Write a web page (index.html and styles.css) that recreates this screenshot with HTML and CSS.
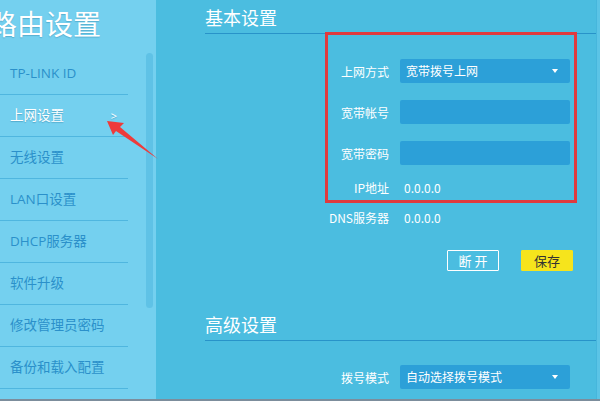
FILE: index.html
```html
<!DOCTYPE html>
<html lang="zh-CN">
<head>
    <meta charset="UTF-8">
    <meta name="viewport" content="width=device-width, initial-scale=1.0">
    <title>路由设置</title>
    <link rel="stylesheet" href="styles.css">
</head>
<body>
<div class="app">
    <!-- Боковое меню -->
    <aside class="sidebar">
        <div class="brand">路由设置</div>
        <div class="side-body">
            <ul class="menu">
                <li>TP-LINK ID</li>
                <li class="active">上网设置<span class="chev">&gt;</span></li>
                <li>无线设置</li>
                <li>LAN口设置</li>
                <li>DHCP服务器</li>
                <li>软件升级</li>
                <li>修改管理员密码</li>
                <li>备份和载入配置</li>
            </ul>
            <div class="scroll-track"></div>
        </div>
    </aside>

    <!-- Основная область -->
    <main class="main">
        <section class="panel basic">
            <h2>基本设置</h2>
            <div class="row first">
                <span class="label">上网方式</span>
                <div class="select">宽带拨号上网<i class="caret"></i></div>
            </div>
            <div class="row">
                <span class="label">宽带帐号</span>
                <input class="field" type="text">
            </div>
            <div class="row">
                <span class="label">宽带密码</span>
                <input class="field" type="password">
            </div>
            <div class="row info ip">
                <span class="label">IP地址</span>
                <span class="value">0.0.0.0</span>
            </div>
            <div class="row info dns">
                <span class="label">DNS服务器</span>
                <span class="value">0.0.0.0</span>
            </div>
            <div class="actions">
                <button class="btn-outline">断 开</button>
                <button class="btn-save">保存</button>
            </div>
        </section>

        <section class="panel advanced">
            <h2>高级设置</h2>
            <div class="row first">
                <span class="label">拨号模式</span>
                <div class="select">自动选择拨号模式<i class="caret"></i></div>
            </div>
        </section>
    </main>
    <div class="edge"></div>
</div>
<div class="status-line"></div>

<!-- Пометки поверх скриншота -->
<div class="highlight"></div>
<svg class="pointer" width="600" height="401" viewBox="0 0 600 401">
    <polygon points="107,121 124,123 120,127 158,159 116,131 113,135" fill="#ee3b3b"/>
</svg>
</body>
</html>
```

FILE: styles.css
```css
:root {
    --color-sidebar: #74d0ef;
    --color-main: #4bbde0;
    --color-field: #2ca0d8;
    --color-line: #2893c9;
    --color-menu-text: #2b90ca;
    --color-menu-line: #4fb6df;
    --color-red: #e03a3e;
    --color-yellow: #f6e41c;
}

html, body {
    margin: 0;
    padding: 0;
}

body {
    width: 600px;
    height: 401px;
    overflow: hidden;
    position: relative;
    background-color: #7c8d9c;
    font-family: "Noto Sans CJK SC", "Open Sans", sans-serif;
    color: #ffffff;
}

.app {
    display: flex;
    height: 399px;
}

/* Боковое меню */
.sidebar {
    width: 156px;
    flex-shrink: 0;
    background-color: var(--color-sidebar);
    overflow: hidden;
}

.brand {
    height: 53px;
    line-height: 47px;
    font-size: 28px;
    margin-left: -11px;
    white-space: nowrap;
    text-shadow: 0 1px 1px rgba(0, 80, 120, 0.25);
}

.side-body {
    display: flex;
}

.menu {
    list-style: none;
    margin: 0;
    padding: 0;
    width: 128px;
}

.menu li {
    height: 41px;
    line-height: 41px;
    padding-left: 10px;
    border-bottom: 1px solid var(--color-menu-line);
    font-family: "Open Sans", "Noto Sans CJK SC", sans-serif;
    font-size: 13.5px;
    color: var(--color-menu-text);
    display: flex;
    justify-content: space-between;
    padding-right: 11px;
}

.menu li.active {
    color: #ffffff;
    text-shadow: 0 1px 1px rgba(0, 80, 120, 0.3);
}

.chev {
    font-size: 11px;
}

.scroll-track {
    width: 7px;
    height: 255px;
    margin-left: 18px;
    border-radius: 4px;
    background-color: #5fc2e6;
}

/* Основная область */
.main {
    flex: 1;
    background-color: var(--color-main);
    padding-left: 49px;
}

.edge {
    width: 4px;
    background-color: #5bc4e6;
    border-left: 1px solid #46b6dc;
    box-sizing: border-box;
}

.panel h2 {
    margin: 0;
    font-size: 18px;
    font-weight: normal;
    line-height: 24px;
    padding-bottom: 4px;
    border-bottom: 1px solid var(--color-line);
}

.basic h2 {
    margin-top: 5px;
}

.advanced h2 {
    margin-top: 41px;
}

.row {
    display: grid;
    grid-template-columns: 184px 170px;
    column-gap: 11px;
    align-items: center;
    height: 24px;
    margin-top: 17px;
    font-size: 12px;
}

.row.first {
    margin-top: 25px;
}

.advanced .row.first {
    margin-top: 24px;
}

.row.ip {
    margin-top: 10px;
}

.row.dns {
    margin-top: 6px;
}

.label {
    text-align: right;
}

.value {
    padding-left: 4px;
}

.select,
.field {
    height: 24px;
    box-sizing: border-box;
    background-color: var(--color-field);
    border: none;
    border-radius: 2px;
    color: #ffffff;
    font-family: inherit;
    font-size: 12px;
}

.select {
    position: relative;
    line-height: 24px;
    padding-left: 6px;
}

.caret {
    position: absolute;
    right: 12px;
    top: 10px;
    border-left: 3px solid transparent;
    border-right: 3px solid transparent;
    border-top: 4px solid #ffffff;
}

.actions {
    display: flex;
    gap: 22px;
    margin-top: 21px;
    margin-left: 242px;
}

.actions button {
    width: 52px;
    height: 21px;
    padding: 0;
    font-family: inherit;
    font-size: 13px;
    line-height: 19px;
    border-radius: 1px;
    cursor: pointer;
}

.btn-outline {
    background: transparent;
    border: 1px solid #ffffff;
    color: #ffffff;
}

.btn-save {
    background-color: var(--color-yellow);
    border: 1px solid var(--color-yellow);
    color: #333333;
}

.status-line {
    height: 2px;
    background-color: #7c8d9c;
}

/* Пометки */
.highlight {
    position: absolute;
    left: 325px;
    top: 32px;
    width: 246px;
    height: 165px;
    border: 3px solid var(--color-red);
    pointer-events: none;
}

.pointer {
    position: absolute;
    left: 0;
    top: 0;
    pointer-events: none;
}
```
